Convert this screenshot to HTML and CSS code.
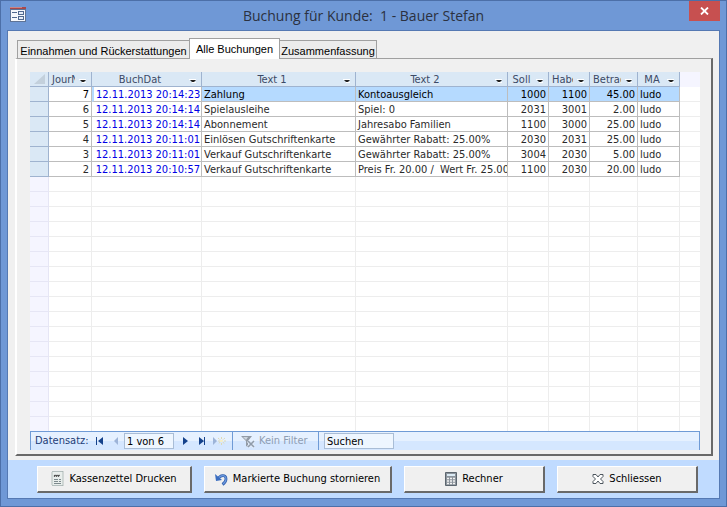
FILE: index.html
```html
<!DOCTYPE html>
<html lang="de">
<head>
<meta charset="utf-8">
<title>Buchung für Kunde</title>
<link rel="stylesheet" href="styles.css">
</head>
<body>
<svg class="defs" aria-hidden="true">
  <symbol id="drop" viewBox="0 0 9 6"><path d="M0 1h7v1H0z" fill="#fff"/><path d="M1 2h6l-2 2H3z" fill="#222"/><path d="M3 4h4v1H3z" fill="#fff"/></symbol>
</svg>
<div class="window">
  <header class="titlebar">
    <svg class="app-icon" width="16" height="15" viewBox="0 0 16 15" shape-rendering="crispEdges">
      <path d="M0 0h16v15H0z" fill="#5e7396"/><path d="M1 3h14v11H1z" fill="#f6f8fc"/><path d="M0 0h16v2H0z" fill="#a8484c"/><path d="M0 0h12v1H0z" fill="#c98686"/>
      <path d="M2 5h5v1H2zM2 10h5v1H2z" fill="#51698f"/><path d="M8 4h6v4H8zM8 9h6v4H8z" fill="#51698f"/><path d="M9 5h4v2H9zM9 10h4v2H9z" fill="#e6edf8"/>
    </svg>
    <h1>Buchung für Kunde:&nbsp; 1 - Bauer Stefan</h1>
    <button class="close" aria-label="Fenster schliessen"><svg width="9" height="8" viewBox="0 0 9 8"><path d="M1 .5l7 7M8 .5l-7 7" stroke="#fff" stroke-width="1.800"/></svg></button>
  </header>
  <main class="client">
    <div class="content">
      <div class="tabs" role="tablist">
        <button class="tab" role="tab">Einnahmen und Rückerstattungen</button>
        <button class="tab active" role="tab" aria-selected="true">Alle Buchungen</button>
        <button class="tab" role="tab">Zusammenfassung</button>
      </div>
      <section class="panel">
        <div class="sheet">
          <table>
            <colgroup><col class="c-sel"><col class="c-jour"><col class="c-date"><col class="c-t1"><col class="c-t2"><col class="c-acc"><col class="c-acc"><col class="c-sum"><col class="c-ma"><col></colgroup>
            <thead>
              <tr>
                <th class="corner"><svg width="11" height="10" viewBox="0 0 11 10"><path d="M11 0v10H0z" fill="#c3d0dc"/></svg></th>
                <th><div class="head"><span>JourN</span><button aria-label="Journal filtern"><svg><use href="#drop"/></svg></button></div></th>
                <th><div class="head"><span>BuchDat</span><button aria-label="BuchDat filtern"><svg><use href="#drop"/></svg></button></div></th>
                <th><div class="head"><span>Text 1</span><button aria-label="Text 1 filtern"><svg><use href="#drop"/></svg></button></div></th>
                <th><div class="head"><span>Text 2</span><button aria-label="Text 2 filtern"><svg><use href="#drop"/></svg></button></div></th>
                <th><div class="head"><span>Soll</span><button aria-label="Soll filtern"><svg><use href="#drop"/></svg></button></div></th>
                <th><div class="head"><span>Haben</span><button aria-label="Haben filtern"><svg><use href="#drop"/></svg></button></div></th>
                <th><div class="head"><span>Betrag</span><button aria-label="Betrag filtern"><svg><use href="#drop"/></svg></button></div></th>
                <th><div class="head"><span>MA</span><button aria-label="MA filtern"><svg><use href="#drop"/></svg></button></div></th>
                <th class="rest"></th>
              </tr>
            </thead>
            <tbody class="records">
              <tr class="current"><td></td><td class="num">7</td><td class="date">12.11.2013 20:14:23</td><td>Zahlung</td><td>Kontoausgleich</td><td class="num">1000</td><td class="num">1100</td><td class="num">45.00</td><td>ludo</td><td></td></tr>
              <tr><td></td><td class="num">6</td><td class="date">12.11.2013 20:14:14</td><td>Spielausleihe</td><td>Spiel: 0</td><td class="num">2031</td><td class="num">3001</td><td class="num">2.00</td><td>ludo</td><td></td></tr>
              <tr><td></td><td class="num">5</td><td class="date">12.11.2013 20:14:14</td><td>Abonnement</td><td>Jahresabo Familien</td><td class="num">1100</td><td class="num">3000</td><td class="num">25.00</td><td>ludo</td><td></td></tr>
              <tr><td></td><td class="num">4</td><td class="date">12.11.2013 20:11:01</td><td>Einlösen Gutschriftenkarte</td><td>Gewährter Rabatt: 25.00%</td><td class="num">2030</td><td class="num">2031</td><td class="num">25.00</td><td>ludo</td><td></td></tr>
              <tr><td></td><td class="num">3</td><td class="date">12.11.2013 20:11:01</td><td>Verkauf Gutschriftenkarte</td><td>Gewährter Rabatt: 25.00%</td><td class="num">3004</td><td class="num">2030</td><td class="num">5.00</td><td>ludo</td><td></td></tr>
              <tr><td></td><td class="num">2</td><td class="date">12.11.2013 20:10:57</td><td>Verkauf Gutschriftenkarte</td><td>Preis Fr. 20.00 /&nbsp; Wert Fr. 25.00</td><td class="num">1100</td><td class="num">2030</td><td class="num">20.00</td><td>ludo</td><td></td></tr>
            </tbody>
            <tbody class="blank" id="blank"></tbody>
          </table>
        </div>
        <nav class="recordbar">
          <label for="pos">Datensatz:</label>
          <button class="first" aria-label="Erster"><svg width="9" height="8" viewBox="0 0 9 8"><path d="M1 0h1v8H1zM8 0v8L3 4z" fill="#15428b"/></svg></button>
          <button class="prev" aria-label="Vorheriger" disabled><svg width="5" height="8" viewBox="0 0 5 8"><path d="M4 0v8L0 4z" fill="#9db4d8"/></svg></button>
          <input id="pos" class="pos" value="1 von 6">
          <button class="next" aria-label="Nächster"><svg width="5" height="8" viewBox="0 0 5 8"><path d="M0 0v8l5-4z" fill="#15428b"/></svg></button>
          <button class="last" aria-label="Letzter"><svg width="7" height="8" viewBox="0 0 7 8"><path d="M0 0v8l5-4zM5 0h1v8H5z" fill="#15428b"/></svg></button>
          <button class="new" aria-label="Neu" disabled><svg width="13" height="8" viewBox="0 0 13 8"><path d="M0 0v8l4-4z" fill="#9db4d8"/><path d="M5 1l7 6M12 1L5 7M8.500 0v8M5 4h8" stroke="#ded9b4" stroke-dasharray="2 1"/><path d="M7 3h3v2H7z" fill="#f3eecb"/></svg></button>
          <button class="filter" disabled><svg width="14" height="13" viewBox="0 0 14 13"><path d="M0 1h11L7 6v6l-2-1V6z" fill="#929ba6"/><path d="M2 2h5L5 5z" fill="#cdd6df"/><path d="M7 6l6 6M13 6l-6 6" stroke="#e6effa" stroke-width="3"/><path d="M7 6l6 6M13 6l-6 6" stroke="#8f9cab" stroke-width="1.600"/></svg>Kein Filter</button>
          <input class="search" aria-label="Suchen" value="Suchen">
        </nav>
      </section>
    </div>
    <footer class="actions">
      <button class="w-print"><svg width="13" height="16" viewBox="0 0 13 16"><path d="M1 1l1-1 1 1 1-1 1 1 1-1 1 1 1-1 1 1 1-1 1 1 1-1v15l-1-1-1 1-1-1-1 1-1-1-1 1-1-1-1 1-1-1-1 1-1-1z" fill="#e9eeec" stroke="#9ba9a7" stroke-width=".7"/><path d="M3 5.500l1.500-1.500M5 5.500l1.500-1.500M7 5.500l1.500-1.500" stroke="#333" stroke-width="1.200"/><path d="M3 8.500h4M8 8.500h2M3 10.500h4M8 10.500h2M3 12.500h7" stroke="#7d8a8d"/></svg>Kassenzettel Drucken</button>
      <button class="w-undo"><svg width="13" height="13" viewBox="0 0 13 13"><path d="M3 6C5 2 11 1 11 6q0 3-3.500 5.500" fill="none" stroke="#2f5fae" stroke-width="2.800"/><path d="M3 6C5 2 11 1 11 6q0 3-3 5" fill="none" stroke="#6e9ade" stroke-width="1.200"/><path d="M0 1l1 7 6-1z" fill="#3a6dc0"/></svg>Markierte Buchung stornieren</button>
      <button class="w-std"><svg width="12" height="14" viewBox="0 0 12 14"><path d="M.5.5h11v13H.5z" fill="#8d959d" stroke="#5c666f"/><path d="M2 2h8v2H2z" fill="#dcebf5"/><path d="M2 6.500h8M2 9h8M2 11.500h8" stroke="#f3f3f3" stroke-width="1.500" stroke-dasharray="2 1"/></svg>Rechner</button>
      <button class="w-std"><svg width="12" height="10" viewBox="0 0 12 10"><path d="M1 .5h3L6 3 8 .5h3v2L8.500 5 11 7.500v2H8L6 7 4 9.500H1v-2L3.500 5 1 2.500z" fill="#fff" stroke="#4d565e"/></svg>Schliessen</button>
    </footer>
  </main>
</div>
<script src="grid.js"></script>
</body>
</html>
```
FILE: grid.js
```js
// Fill the rest of the datasheet with empty ruled rows.
const body = document.getElementById("blank");
for (let i = 0; i < 60; i++) {
  const row = body.insertRow();
  for (let c = 0; c < 10; c++) row.insertCell();
}
```
FILE: styles.css
```css
* { box-sizing: border-box; }
body { margin: 0; font: 11px/14px "DejaVu Sans Condensed", "Noto Sans", sans-serif; color: #000; }
button, input { font: inherit; color: inherit; margin: 0; padding: 0; border: 0; background: none; border-radius: 0; }
svg { display: block; flex: none; }
.defs { position: absolute; width: 0; height: 0; }

.window { height: 100vh; display: flex; flex-direction: column; background: #6f98d6; border: 1px solid #4c6fa8; padding: 0 6px 7px; }
.titlebar { height: 29px; flex: none; display: flex; align-items: flex-start; }
.app-icon { margin: 6px 0 0 3px; }
h1 { flex: 1; margin: 0; font: 14px/30px "Open Sans", "Noto Sans", sans-serif; color: #2b3140; text-align: center; padding-left: 12px; }
.close { width: 31px; height: 20px; background: #c75050; display: flex; align-items: center; justify-content: center; }

.client { flex: 1; min-height: 0; display: flex; flex-direction: column; border: 1px solid #5579b3; }
.content { flex: 1; min-height: 0; display: flex; flex-direction: column; background: #f0f0f0; padding: 7px 6px 4px 7px; }
.tabs { display: flex; align-items: flex-end; padding-left: 2px; font: 11px/16px "Liberation Sans", sans-serif; }
.tab { height: 18px; padding: 2px 3px 0; background: #ececec; border: 1px solid #a0a0a0; border-bottom: 0; white-space: nowrap; width: 97px; display: flex; justify-content: center; }
.tab:first-child { width: 172px; border-right: 0; }
.tab.active { width: 91px; height: 21px; padding-top: 2px; background: #fff; margin-bottom: -1px; z-index: 1; }
.tab:last-child { border-left: 0; }
.panel { flex: 1; min-height: 0; display: flex; flex-direction: column; background: #f0f0f0; border: 1px solid #a0a0a0; border-left: 2px solid #fff; border-right: 2px solid #696969; border-bottom: 2px solid #696969; padding: 13px 11px 4px 13px; }

.sheet { flex: 1; min-height: 0; overflow: hidden; background: #fff; }
table { width: 100%; table-layout: fixed; border-collapse: separate; border-spacing: 0; }
.c-sel { width: 19px; } .c-jour { width: 43px; } .c-date { width: 110px; } .c-t1 { width: 154px; } .c-t2 { width: 152px; }
.c-acc { width: 41px; } .c-sum { width: 48px; } .c-ma { width: 42px; }
th, td { height: 15px; padding: 2px 2px 0; line-height: 12px; border: solid #ededed; border-width: 0 1px 1px 0; white-space: nowrap; overflow: hidden; }
th { font-weight: normal; color: #3c4a66; background: #dae8f5; border-color: #9fb3cf; padding-top: 0; }
.corner svg { margin-left: 2px; }
th.rest { background: #f5f5ff; border-color: #f5f5ff; }
.head { display: flex; align-items: center; height: 14px; }
.head span { flex: 1; overflow: hidden; text-align: center; line-height: 12px; padding: 2px 0 0 1px; }
.head button { flex: none; width: 14px; height: 8px; margin-top: 2px; padding: 2px 0 0 4px; }
.head svg { width: 9px; height: 6px; }
.records td { border-color: #bdbdbd; color: #2a2a2a; }
.records td:first-child { background: #dae8f5; border-color: #9fb3cf; }
.records td:last-child, td:last-child { border-color: #ededed; border-right: 0; }
.blank td:first-child { background: #f5f5ff; border-color: #e6e6f5; }
.num, .date { text-align: right; }
.records .date { color: #0000e6; padding-right: 1px; }
.current td { background: #b5daff; }
.records .current td { color: #000; }
.records .current .date { color: #0000e6; border-left: 2px solid #b5daff; }
.current td:nth-child(2), .current td:nth-child(3), .current td:last-child { background: #fff; }

.recordbar { height: 19px; flex: none; display: flex; align-items: center; border: 1px solid #6f9bd6; border-bottom: 0; background: linear-gradient(#e6f1ff 9px, #d5e7ff 9px); color: #1d3d77; padding-left: 4px; }
.recordbar label { width: 60px; }
.first { width: 19px; } .prev { width: 10px; } .next { width: 16px; } .last { width: 14px; } .new { width: 19px; }
.recordbar input { height: 16px; background: #eef6ff; border: 1px solid #a9bdd6; padding: 0 2px; color: #000; }
.pos { width: 50px; margin-right: 9px; }
.filter { height: 18px; width: 87px; border: solid #6f9bd6; border-width: 0 1px; display: flex; align-items: center; gap: 4px; padding-left: 8px; color: #8e9db3; white-space: nowrap; }
.search { width: 70px; margin-left: 5px; }

.actions { flex: none; display: flex; gap: 12px; background: #c0dbff; padding: 6px 20px 5px 29px; }
.actions button { height: 27px; display: flex; align-items: center; justify-content: center; gap: 5px; background: #f0f0f0; border: solid; border-width: 1px 2px 2px 1px; border-color: #fff #696969 #696969 #fff; white-space: nowrap; }
.w-print { flex: 0 1 155px; } .w-undo { flex: 0 1 188px; } .w-std { flex: 0 1 141px; }
```
